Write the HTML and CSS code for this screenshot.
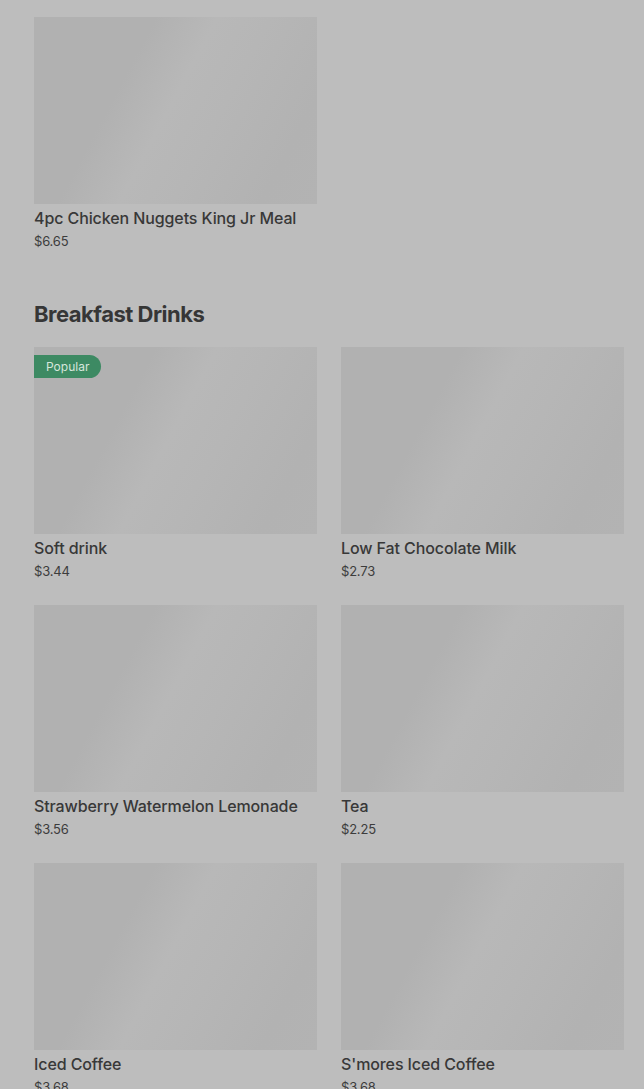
FILE: index.html
```html
<!DOCTYPE html>
<html>
<head>
  <meta charset="UTF-8">
  <meta name="viewport" content="width=device-width, initial-scale=1.0">
  <title>Menu</title>
  <link rel="stylesheet" href="styles.css">
</head>
<body>
  <div class="menu">
    <section class="group">
      <div class="items">
        <div class="item">
          <div class="pic"></div>
          <div class="name">4pc Chicken Nuggets King Jr Meal</div>
          <div class="price">$6.65</div>
        </div>
      </div>
    </section>

    <section class="group">
      <h2>Breakfast Drinks</h2>
      <div class="items">
        <div class="item">
          <div class="pic"><span class="tag">Popular</span></div>
          <div class="name">Soft drink</div>
          <div class="price">$3.44</div>
        </div>
        <div class="item">
          <div class="pic"></div>
          <div class="name">Low Fat Chocolate Milk</div>
          <div class="price">$2.73</div>
        </div>
        <div class="item">
          <div class="pic"></div>
          <div class="name">Strawberry Watermelon Lemonade</div>
          <div class="price">$3.56</div>
        </div>
        <div class="item">
          <div class="pic"></div>
          <div class="name">Tea</div>
          <div class="price">$2.25</div>
        </div>
        <div class="item">
          <div class="pic"></div>
          <div class="name">Iced Coffee</div>
          <div class="price">$3.68</div>
        </div>
        <div class="item">
          <div class="pic"></div>
          <div class="name">S'mores Iced Coffee</div>
          <div class="price">$3.68</div>
        </div>
      </div>
    </section>
  </div>
</body>
</html>
```

FILE: styles.css
```css
html, body {height: 100%}
html {background: #bdbdbd; color: #333;}
body {margin: 0; font-family: Inter, "Noto Sans", sans-serif; overflow: hidden;}

.menu {padding: 17px 20px 0 34px;}
.group + .group {margin-top: 48px;}
.group h2 {margin: 0 0 17px; font-size: 22px; line-height: 32px; font-weight: 700; letter-spacing: -0.5px; color: #363636;}

.items {display: grid; grid-template-columns: 1fr 1fr; column-gap: 24px; row-gap: 25px;}
.item {min-width: 0;}
.pic {height: 187px; position: relative; background: linear-gradient(118deg, #b1b1b1 0%, #b1b1b1 32%, #b8b8b8 48%, #b6b6b6 62%, #b2b2b2 85%, #b3b3b3 100%);}
.name {margin-top: 4px; font-size: 16px; line-height: 20px; font-weight: 500; letter-spacing: -0.1px; color: #383838; white-space: nowrap;}
.price {margin-top: 4px; font-size: 13px; line-height: 18px; letter-spacing: -0.2px; color: #3c3c3c;}

.tag {position: absolute; left: 0; top: 8px; height: 23px; line-height: 23px; padding: 0 12px; font-size: 12px; color: #d6e6dc; background: #3d8a63; border-radius: 0 12px 12px 0;}
```
